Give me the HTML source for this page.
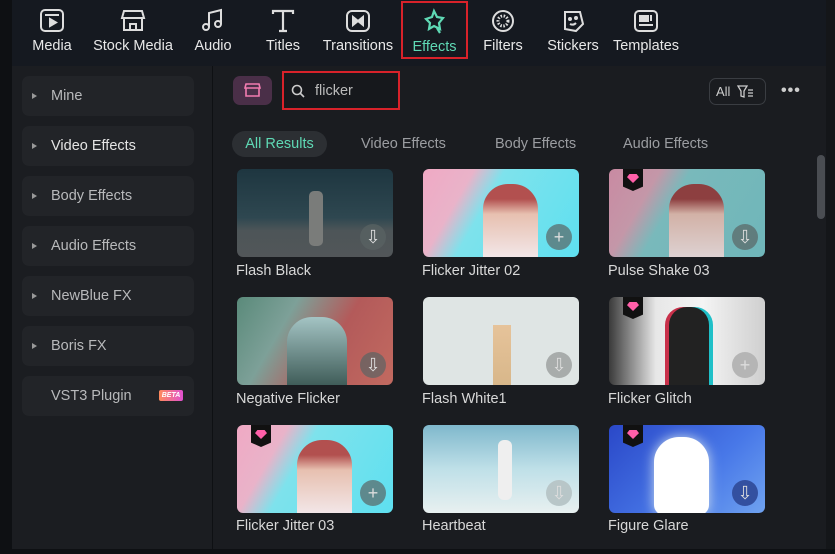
<!DOCTYPE html>
<html><head><meta charset="utf-8"><style>
*{margin:0;padding:0;box-sizing:border-box}
body{width:835px;height:554px;background:#0e1013;font-family:"Liberation Sans",sans-serif;position:relative;overflow:hidden}
.top{position:absolute;left:12px;top:0;width:814px;height:66px;background:#151920}
.tab{position:absolute;top:0;height:66px;text-align:center;color:#e8e8e8;font-size:14.5px}
.tab svg{position:absolute;top:7px;left:50%;margin-left:-14px}
.tab span{position:absolute;top:38px;left:0;right:0;white-space:nowrap}
.side{position:absolute;left:12px;top:66px;width:200px;height:483px;background:#1b1d21}
.item{position:absolute;left:10px;width:172px;height:40px;background:#222428;border-radius:7px;color:#b8b9bb;font-size:14.5px;line-height:40px;padding-left:29px}
.item:before{content:"";position:absolute;left:10px;top:17px;border-left:5px solid #999;border-top:3px solid transparent;border-bottom:3px solid transparent}
.item.nb:before{display:none}
.main{position:absolute;left:213px;top:66px;width:613px;height:483px;background:#1a1c20}
.right{position:absolute;left:826px;top:0;width:9px;height:554px;background:#141619}
.bot{position:absolute;left:0;top:549px;width:835px;height:5px;background:#0e1013}
.th{position:absolute;width:156px;height:88px;border-radius:6px;overflow:hidden}
.lbl{position:absolute;color:#d8d8d8;font-size:14.5px}
.btn{position:absolute;right:7px;bottom:7px;width:26px;height:26px;border-radius:50%;background:rgba(90,100,100,.7);color:#ddd;text-align:center;line-height:26px;font-size:18px}
.gem{position:absolute;left:14px;top:0;width:20px;height:22px;background:#111;clip-path:polygon(0 0,100% 0,100% 80%,50% 100%,0 80%)}
.gem:after{content:"";position:absolute;left:4px;top:5px;width:12px;height:9px;background:#ff5fa8;clip-path:polygon(20% 0,80% 0,100% 35%,50% 100%,0 35%)}
.cat{position:absolute;top:136px;font-size:14.5px;color:#9b9da1}
</style></head><body>
<div class="top"></div>
<div class="tab" style="left:22px;width:60px"><svg width="28" height="28" viewBox="0 0 28 28" fill="none" stroke="#ddd" stroke-width="2"><rect x="3" y="3" width="22" height="21" rx="4"/><line x1="7" y1="8" x2="21" y2="8"/><path d="M12 12v7l6-3.5z" fill="#ddd"/></svg><span>Media</span></div>
<div class="tab" style="left:90px;width:86px"><svg width="28" height="28" viewBox="0 0 28 28" fill="none" stroke="#ddd" stroke-width="2"><path d="M5 4h18l2 7H3z"/><path d="M5 11v12h18V11"/><path d="M11 23v-6h6v6"/></svg><span>Stock Media</span></div>
<div class="tab" style="left:185px;width:56px"><svg width="28" height="28" viewBox="0 0 28 28" fill="none" stroke="#ddd" stroke-width="2"><path d="M10 20V6l12-3v14"/><circle cx="7" cy="20" r="3"/><circle cx="19" cy="17" r="3"/></svg><span>Audio</span></div>
<div class="tab" style="left:255px;width:56px"><svg width="28" height="28" viewBox="0 0 28 28" fill="none" stroke="#ddd" stroke-width="2.2"><path d="M4 7V4h20v3M14 4v20M10 24h8"/></svg><span>Titles</span></div>
<div class="tab" style="left:320px;width:76px"><svg width="28" height="28" viewBox="0 0 28 28" fill="none" stroke="#ddd" stroke-width="2"><rect x="3" y="4" width="22" height="20" rx="5"/><path d="M9 10v8l5-4zM19 10v8l-5-4z" fill="#ddd"/></svg><span>Transitions</span></div>
<div class="tab" style="left:401px;width:67px;color:#5fd9b5;border:2px solid #d8222a;height:58px;top:1px"><svg width="28" height="28" viewBox="0 0 28 28" fill="none" stroke="#5fd9b5" stroke-width="2.2" style="top:5px"><path d="M13 3l3 6 6 1-4 5 1 6-6-3-5 3 1-6-4-4 6-2z"/><path d="M16 20l3 5"/></svg><span style="top:36px">Effects</span></div>
<div class="tab" style="left:478px;width:50px"><svg width="28" height="28" viewBox="0 0 28 28" fill="none" stroke="#ddd" stroke-width="2"><circle cx="14" cy="14" r="10"/><circle cx="14" cy="14" r="5" stroke-dasharray="1.5 1.5" stroke-width="3"/></svg><span>Filters</span></div>
<div class="tab" style="left:545px;width:56px"><svg width="28" height="28" viewBox="0 0 28 28" fill="none" stroke="#ddd" stroke-width="2"><path d="M6 5h15l3 12-7 7-11-2z"/><circle cx="11" cy="12" r="1" fill="#ddd"/><circle cx="17" cy="11" r="1" fill="#ddd"/><path d="M11 17c2 1 4 1 6-1"/></svg><span>Stickers</span></div>
<div class="tab" style="left:611px;width:70px"><svg width="28" height="28" viewBox="0 0 28 28" fill="none" stroke="#ddd" stroke-width="2"><rect x="3" y="4" width="22" height="20" rx="4"/><rect x="8" y="9" width="8" height="5" fill="#ddd"/><line x1="19" y1="8" x2="19" y2="14"/><line x1="7" y1="18" x2="21" y2="18"/></svg><span>Templates</span></div>

<div class="side">
<div class="item" style="top:10px">Mine</div>
<div class="item" style="top:60px;color:#e4e4e4">Video Effects</div>
<div class="item" style="top:110px">Body Effects</div>
<div class="item" style="top:160px">Audio Effects</div>
<div class="item" style="top:210px">NewBlue FX</div>
<div class="item" style="top:260px">Boris FX</div>
<div class="item nb" style="top:310px">VST3 Plugin<span style="position:absolute;left:137px;top:14px;width:24px;height:11px;border-radius:2px;background:linear-gradient(90deg,#ff8a5c,#e050d0);color:#fff;font-size:7px;font-weight:bold;font-style:italic;line-height:11px;text-align:center">BETA</span></div>
</div>
<div class="main"></div>
<div class="right"></div>
<div class="bot"></div>

<div style="position:absolute;left:233px;top:76px;width:39px;height:29px;border-radius:7px;background:#4a2f48"><svg width="39" height="29" viewBox="0 0 39 29" fill="none" stroke="#f27cb0" stroke-width="1.6"><path d="M13 8h13l1 4H12z"/><path d="M13 12v8h13v-8"/></svg></div>
<div style="position:absolute;left:282px;top:71px;width:118px;height:39px;border:2px solid #d8222a;background:#16181c"><svg style="position:absolute;left:7px;top:11px" width="14" height="14" viewBox="0 0 14 14" fill="none" stroke="#ccc" stroke-width="1.6"><circle cx="6" cy="6" r="4.5"/><path d="M9.5 9.5L13 13"/></svg><span style="position:absolute;left:31px;top:10px;color:#bbb;font-size:14.5px">flicker</span></div>
<div style="position:absolute;left:709px;top:78px;width:57px;height:27px;border:1px solid #3a3d42;border-radius:7px;color:#ccc;font-size:13px;line-height:25px;padding-left:6px">All<svg style="position:absolute;left:27px;top:5px" width="18" height="16" viewBox="0 0 18 16" fill="none" stroke="#ccc" stroke-width="1.3"><path d="M1 2h9L7 7v6L4 12V7z"/><path d="M11 6h5M11 9h5M11 12h5"/></svg></div>
<div style="position:absolute;left:781px;top:82px;color:#ccc;font-size:16px;letter-spacing:1px;font-weight:bold">•••</div>

<div style="position:absolute;left:232px;top:131px;width:95px;height:26px;border-radius:13px;background:#2c2f33;color:#5fd9b5;font-size:14.5px;line-height:26px;text-align:center">All Results</div>
<div class="cat" style="left:361px">Video Effects</div>
<div class="cat" style="left:495px">Body Effects</div>
<div class="cat" style="left:623px">Audio Effects</div>
<div style="position:absolute;left:817px;top:155px;width:8px;height:64px;border-radius:4px;background:#4a4d52"></div>

<div class="th" style="left:237px;top:169px;background:linear-gradient(180deg,#1e3640 0%,#2e4750 55%,#4d5558 70%,#525659 100%)"><div style="position:absolute;left:72px;top:22px;width:14px;height:55px;background:#7a7c7a;border-radius:5px"></div><div class="btn">⇩</div></div>
<div class="lbl" style="left:236px;top:263px">Flash Black</div>
<div class="th" style="left:423px;top:169px;background:linear-gradient(120deg,#f0a9c4 0%,#e9b3c9 25%,#7ee2ec 40%,#5ee0f0 100%)"><div style="position:absolute;left:60px;top:15px;width:55px;height:75px;border-radius:25px 25px 0 0;background:linear-gradient(#b2504f 20%,#e7c0b0 40%,#f3e8ea)"></div><div class="btn">+</div></div>
<div class="lbl" style="left:422px;top:263px">Flicker Jitter 02</div>
<div class="th" style="left:609px;top:169px;background:linear-gradient(120deg,#c98aa2 0%,#c497a8 25%,#79b9bb 40%,#6fb6ba 100%)"><div style="position:absolute;left:60px;top:15px;width:55px;height:75px;border-radius:25px 25px 0 0;background:linear-gradient(#8d3f40 20%,#d2b1a6 40%,#ded3d4)"></div><div class="gem"></div><div class="btn">⇩</div></div>
<div class="lbl" style="left:608px;top:263px">Pulse Shake 03</div>

<div class="th" style="left:237px;top:297px;background:linear-gradient(120deg,#5a8a7a 0%,#7da098 30%,#b35a5a 60%,#c26a60 100%)"><div style="position:absolute;left:50px;top:20px;width:60px;height:70px;border-radius:25px 25px 0 0;background:linear-gradient(#a4c4c4,#3d5a56)"></div><div class="btn">⇩</div></div>
<div class="lbl" style="left:236px;top:391px">Negative Flicker</div>
<div class="th" style="left:423px;top:297px;background:#dfe5e4"><div style="position:absolute;left:70px;top:28px;width:18px;height:60px;background:linear-gradient(#e6c39a,#d8b78a)"></div><div class="btn" style="background:#a8acab">⇩</div></div>
<div class="lbl" style="left:422px;top:391px">Flash White1</div>
<div class="th" style="left:609px;top:297px;background:linear-gradient(90deg,#3a3a3a,#e7e7e7 30%,#f4f4f4 60%,#cfcfcf)"><div style="position:absolute;left:60px;top:10px;width:40px;height:78px;background:#222;border-radius:18px 18px 0 0;box-shadow:-4px 0 #c8304a,4px 0 #20c0c8"></div><div class="gem"></div><div class="btn" style="background:#b5b5b5">+</div></div>
<div class="lbl" style="left:608px;top:391px">Flicker Glitch</div>

<div class="th" style="left:237px;top:425px;background:linear-gradient(120deg,#f0a9c4 0%,#e9b3c9 25%,#7ee2ec 40%,#5ee0f0 100%)"><div style="position:absolute;left:60px;top:15px;width:55px;height:75px;border-radius:25px 25px 0 0;background:linear-gradient(#b2504f 20%,#e7c0b0 40%,#f3e8ea)"></div><div class="gem"></div><div class="btn">+</div></div>
<div class="lbl" style="left:236px;top:518px">Flicker Jitter 03</div>
<div class="th" style="left:423px;top:425px;background:linear-gradient(180deg,#7fb8cc,#bfe0e8 50%,#e8f0f0)"><div style="position:absolute;left:75px;top:15px;width:14px;height:60px;background:#efefef;border-radius:6px"></div><div class="btn" style="background:#b8c6c8">⇩</div></div>
<div class="lbl" style="left:422px;top:518px">Heartbeat</div>
<div class="th" style="left:609px;top:425px;background:linear-gradient(135deg,#2a48c8,#4878e8 60%,#6fa2f0)"><div style="position:absolute;left:45px;top:12px;width:55px;height:78px;background:#fff;border-radius:25px 25px 10px 10px;box-shadow:0 0 12px #cde"></div><div class="gem"></div><div class="btn" style="background:#3350a0">⇩</div></div>
<div class="lbl" style="left:608px;top:518px">Figure Glare</div>
</body></html>
